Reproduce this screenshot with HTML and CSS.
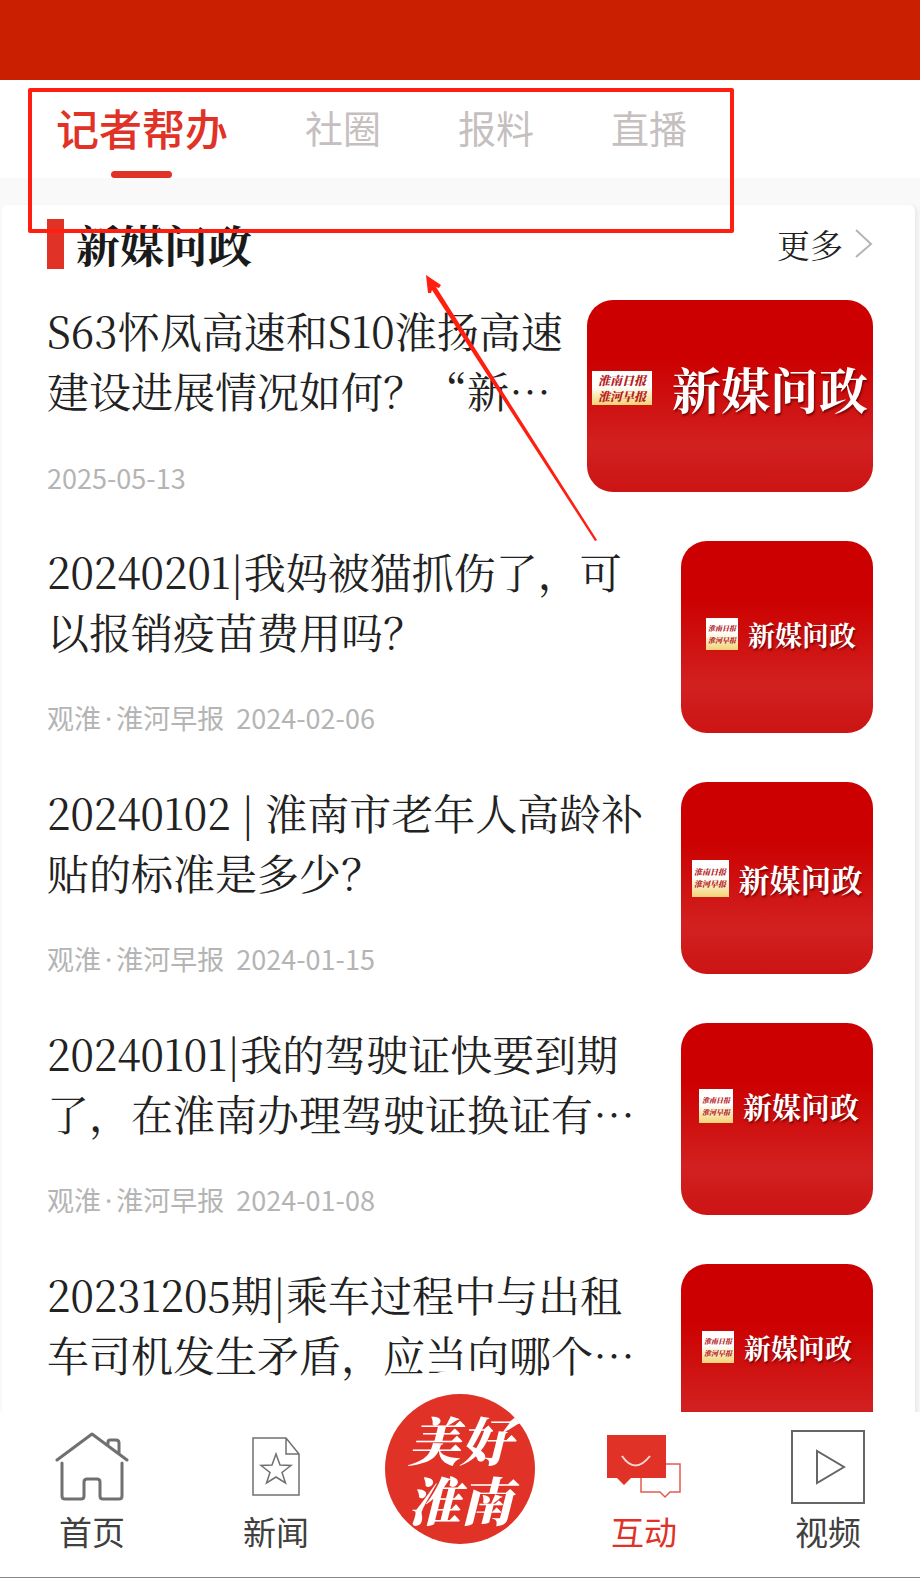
FILE: index.html
```html
<!DOCTYPE html>
<html lang="zh-CN">
<head>
    <meta charset="UTF-8">
    <meta name="viewport" content="width=device-width, initial-scale=1.0">
    <title>记者帮办</title>
    <link rel="stylesheet" href="styles.css">
</head>
<body>
    <div class="app">
        <div class="status-bar"></div>

        <nav class="tabs">
            <button class="tab active">记者帮办</button>
            <button class="tab">社圈</button>
            <button class="tab">报料</button>
            <button class="tab">直播</button>
        </nav>

        <main class="content">
            <section class="card">
                <header class="card-header">
                    <h1 class="card-title">新媒问政</h1>
                    <a class="more" href="#">更多
                        <svg width="18" height="30" viewBox="0 0 18 30" fill="none" stroke="#b5b5b5" stroke-width="2"><path d="M1 1l15 14L1 28"/></svg>
                    </a>
                </header>

                <article class="news-item">
                    <div class="news-text">
                        <h2 class="news-title"><a href="#">S63怀凤高速和S10淮扬高速建设进展情况如何？“新…</a></h2>
                        <div class="news-meta"><span>2025-05-13</span></div>
                    </div>
                    <div class="thumb thumb-wide">
                        <div class="stamp"><span>淮南日报</span><span>淮河早报</span></div>
                        <span class="thumb-name">新媒问政</span>
                    </div>
                </article>

                <article class="news-item">
                    <div class="news-text">
                        <h2 class="news-title"><a href="#">20240201|我妈被猫抓伤了，可以报销疫苗费用吗？</a></h2>
                        <div class="news-meta"><span>观淮<i class="dot">·</i>淮河早报</span><span>2024-02-06</span></div>
                    </div>
                    <div class="thumb">
                        <div class="stamp"><span>淮南日报</span><span>淮河早报</span></div>
                        <span class="thumb-name">新媒问政</span>
                    </div>
                </article>

                <article class="news-item">
                    <div class="news-text">
                        <h2 class="news-title"><a href="#">20240102 | 淮南市老年人高龄补贴的标准是多少？</a></h2>
                        <div class="news-meta"><span>观淮<i class="dot">·</i>淮河早报</span><span>2024-01-15</span></div>
                    </div>
                    <div class="thumb thumb-large">
                        <div class="stamp"><span>淮南日报</span><span>淮河早报</span></div>
                        <span class="thumb-name">新媒问政</span>
                    </div>
                </article>

                <article class="news-item">
                    <div class="news-text">
                        <h2 class="news-title"><a href="#">20240101|我的驾驶证快要到期了，在淮南办理驾驶证换证有…</a></h2>
                        <div class="news-meta"><span>观淮<i class="dot">·</i>淮河早报</span><span>2024-01-08</span></div>
                    </div>
                    <div class="thumb thumb-medium">
                        <div class="stamp"><span>淮南日报</span><span>淮河早报</span></div>
                        <span class="thumb-name">新媒问政</span>
                    </div>
                </article>

                <article class="news-item">
                    <div class="news-text">
                        <h2 class="news-title"><a href="#">20231205期|乘车过程中与出租车司机发生矛盾，应当向哪个…</a></h2>
                    </div>
                    <div class="thumb thumb-high">
                        <div class="stamp"><span>淮南日报</span><span>淮河早报</span></div>
                        <span class="thumb-name">新媒问政</span>
                    </div>
                </article>
            </section>
        </main>

        <nav class="bottom-nav">
            <a class="nav-item" href="#">
                <svg width="74" height="74" viewBox="0 0 74 74" fill="none" stroke="#707070" stroke-width="3" stroke-linecap="round" stroke-linejoin="round">
                    <path d="M2 30L37 4l35 26M53 14V12q0-2 2-2h6q3 0 3 3v10M7 33v33q0 3 3 3h16q3 0 3-3V52q0-3 3-3h10q3 0 3 3v14q0 3 3 3h16q3 0 3-3V33"/>
                </svg>
                <span>首页</span>
            </a>
            <a class="nav-item" href="#">
                <svg width="74" height="74" viewBox="0 0 74 74" fill="none" stroke="#707070" stroke-width="1.5">
                    <path d="M14 8H47L60 24V65H14ZM47 8V24H60"/>
                    <path d="M37 24l4 11 11 .5-9 7 3.500 10.500-9.500-6-9.500 6L31 42.500l-9-7 11-.5z"/>
                </svg>
                <span>新闻</span>
            </a>
            <a class="nav-item nav-center" href="#">
                <span class="seal"><span>美好</span><span>淮南</span></span>
            </a>
            <a class="nav-item active" href="#">
                <svg width="74" height="74" viewBox="0 0 74 74" fill="none">
                    <path d="M34 34H73V62H63L58 67 53 62H34Z" fill="#fff" stroke="#e55a50" stroke-width="1.500"/>
                    <path d="M0 5H59V48H24L17 55 10 48H0Z" fill="#e03226"/>
                    <path d="M15 26q13 19 28 0" stroke="#f7d6d3" stroke-width="2"/>
                </svg>
                <span>互动</span>
            </a>
            <a class="nav-item" href="#">
                <svg width="74" height="74" viewBox="0 0 74 74" fill="none" stroke="#666" stroke-width="2">
                    <path d="M1 1H73V73H1ZM26 21V53L53 37Z"/>
                </svg>
                <span>视频</span>
            </a>
        </nav>

        <!-- 标注框和箭头 -->
        <div class="mark-box"></div>
        <svg class="mark-arrow" width="172" height="267" viewBox="0 0 172 267" fill="#ff1e10">
            <path d="M0 0L15 10 13 13 10 12 171 265 169 266 6 15 5 18 2 18Z"/>
        </svg>
    </div>
</body>
</html>
```
FILE: styles.css
```css
* {
    box-sizing: border-box;
}

body {
    margin: 0;
    font-family: "Noto Sans CJK SC", sans-serif;
    color: #222;
    background: #f9f9f9;
}

a {
    color: inherit;
    text-decoration: none;
}

.app {
    position: relative;
    display: flex;
    flex-direction: column;
    height: 100vh;
    overflow: hidden;
}

.status-bar {
    flex: none;
    height: 80px;
    background: #ca1f00;
}

/* 顶部标签 */
.tabs {
    flex: none;
    display: flex;
    gap: 77px;
    height: 98px;
    padding-left: 56px;
    background: #fff;
}

.tab {
    position: relative;
    padding: 0 0 4px;
    border: none;
    background: none;
    font-family: inherit;
    font-size: 38px;
    line-height: 94px;
    color: #c6bfbf;
    cursor: pointer;
}

.tab.active {
    font-size: 43px;
    font-weight: 500;
    color: #e03226;
}

.tab.active::after {
    content: "";
    position: absolute;
    left: 50%;
    bottom: 0;
    width: 61px;
    height: 7px;
    margin-left: -31px;
    border-radius: 4px;
    background: #e03226;
}

/* 列表 */
.content {
    flex: 1;
    min-height: 0;
    overflow: hidden;
    padding: 27px 5px 0 2px;
}

.card {
    padding: 14px 42px 0 45px;
    background: #fff;
    border-radius: 6px;
    box-shadow: 3px 1px 4px rgba(0, 0, 0, 0.06);
}

.card-header {
    display: flex;
    align-items: center;
    justify-content: space-between;
    height: 50px;
    margin-bottom: 31px;
}

.card-title {
    margin: 0;
    padding-left: 12px;
    border-left: 17px solid #e03226;
    font-family: "Noto Serif CJK SC", "Noto Sans CJK SC", serif;
    font-size: 44px;
    line-height: 50px;
    color: #1a1a1a;
}

.more {
    display: flex;
    align-items: center;
    gap: 12px;
    font-family: "Noto Serif CJK SC", "Noto Sans CJK SC", serif;
    font-size: 33px;
    line-height: 50px;
}

.news-item {
    display: flex;
    gap: 24px;
    margin-bottom: 49px;
}

.news-text {
    flex: 1;
    min-width: 0;
    display: flex;
    flex-direction: column;
    justify-content: space-between;
}

.news-title {
    margin: 0;
    font-family: "Noto Serif CJK SC", "Noto Sans CJK SC", serif;
    font-size: 42px;
    font-weight: 400;
    line-height: 60px;
    font-kerning: none;
}

.news-meta {
    display: flex;
    gap: 12px;
    font-size: 27px;
    line-height: 28px;
    color: #b4b4b4;
}

.dot {
    margin: 0 4px;
    font-family: "Noto Sans", sans-serif;
    font-style: normal;
}

.thumb {
    flex: none;
    display: flex;
    align-items: center;
    justify-content: center;
    gap: 10px;
    width: 192px;
    height: 192px;
    padding: 0 0 6px 8px;
    border-radius: 26px;
    overflow: hidden;
    background: linear-gradient(#c00 30%, #d22020 75%, #cc1414);
    font-size: 27px;
}

.thumb-wide {
    width: 286px;
    gap: 20px;
    padding: 0 0 16px;
    font-size: 49px;
}

.thumb-large {
    padding: 0;
    font-size: 31px;
}

.thumb-medium {
    padding: 0 0 26px 4px;
    font-size: 29px;
}

.thumb-high {
    padding: 0 0 26px;
}

.thumb-name {
    font-family: "Noto Serif CJK SC", "Noto Sans CJK SC", serif;
    font-weight: 700;
    line-height: 1;
    white-space: nowrap;
    color: #fff;
    text-shadow: 1px 2px 2px rgba(80, 0, 0, 0.7);
}

.stamp {
    flex: none;
    display: flex;
    flex-direction: column;
    align-items: center;
    justify-content: center;
    width: 32px;
    height: 32px;
    background: linear-gradient(#fff 45%, #f3d375);
    font-family: "Noto Serif CJK SC", "Noto Sans CJK SC", serif;
    font-size: 7px;
    font-style: italic;
    font-weight: 900;
    line-height: 12px;
    color: #b5201c;
}

.thumb-wide .stamp {
    width: 60px;
    height: 34px;
    font-size: 12px;
    line-height: 16px;
}

.thumb-large .stamp {
    width: 37px;
    height: 37px;
    font-size: 8px;
}

.thumb-medium .stamp {
    width: 34px;
    height: 34px;
}

/* 底部导航 */
.bottom-nav {
    position: relative;
    flex: none;
    display: grid;
    grid-template-columns: repeat(5, 1fr);
    height: 166px;
    background: #fff;
    border-bottom: 1px solid #888;
}

.nav-item {
    display: flex;
    flex-direction: column;
    align-items: center;
    gap: 5px;
    padding-top: 18px;
    font-size: 33px;
    line-height: 44px;
    color: #404040;
}

.nav-item.active {
    color: #e03226;
}

.nav-center {
    padding: 0;
}

.seal {
    display: flex;
    flex-direction: column;
    align-items: center;
    justify-content: center;
    width: 150px;
    height: 150px;
    margin-top: -18px;
    border-radius: 50%;
    background: #e03226;
    box-shadow: 0 0 0 24px #fff;
    font-family: "Noto Serif CJK SC", "Noto Sans CJK SC", serif;
    font-size: 52px;
    font-style: italic;
    font-weight: 900;
    line-height: 60px;
    color: #fff;
}

.mark-box {
    position: absolute;
    top: 88px;
    left: 28px;
    width: 706px;
    height: 145px;
    border: 4px solid #ff1e10;
    border-radius: 2px;
    pointer-events: none;
}

.mark-arrow {
    position: absolute;
    top: 275px;
    left: 426px;
    pointer-events: none;
}
```
